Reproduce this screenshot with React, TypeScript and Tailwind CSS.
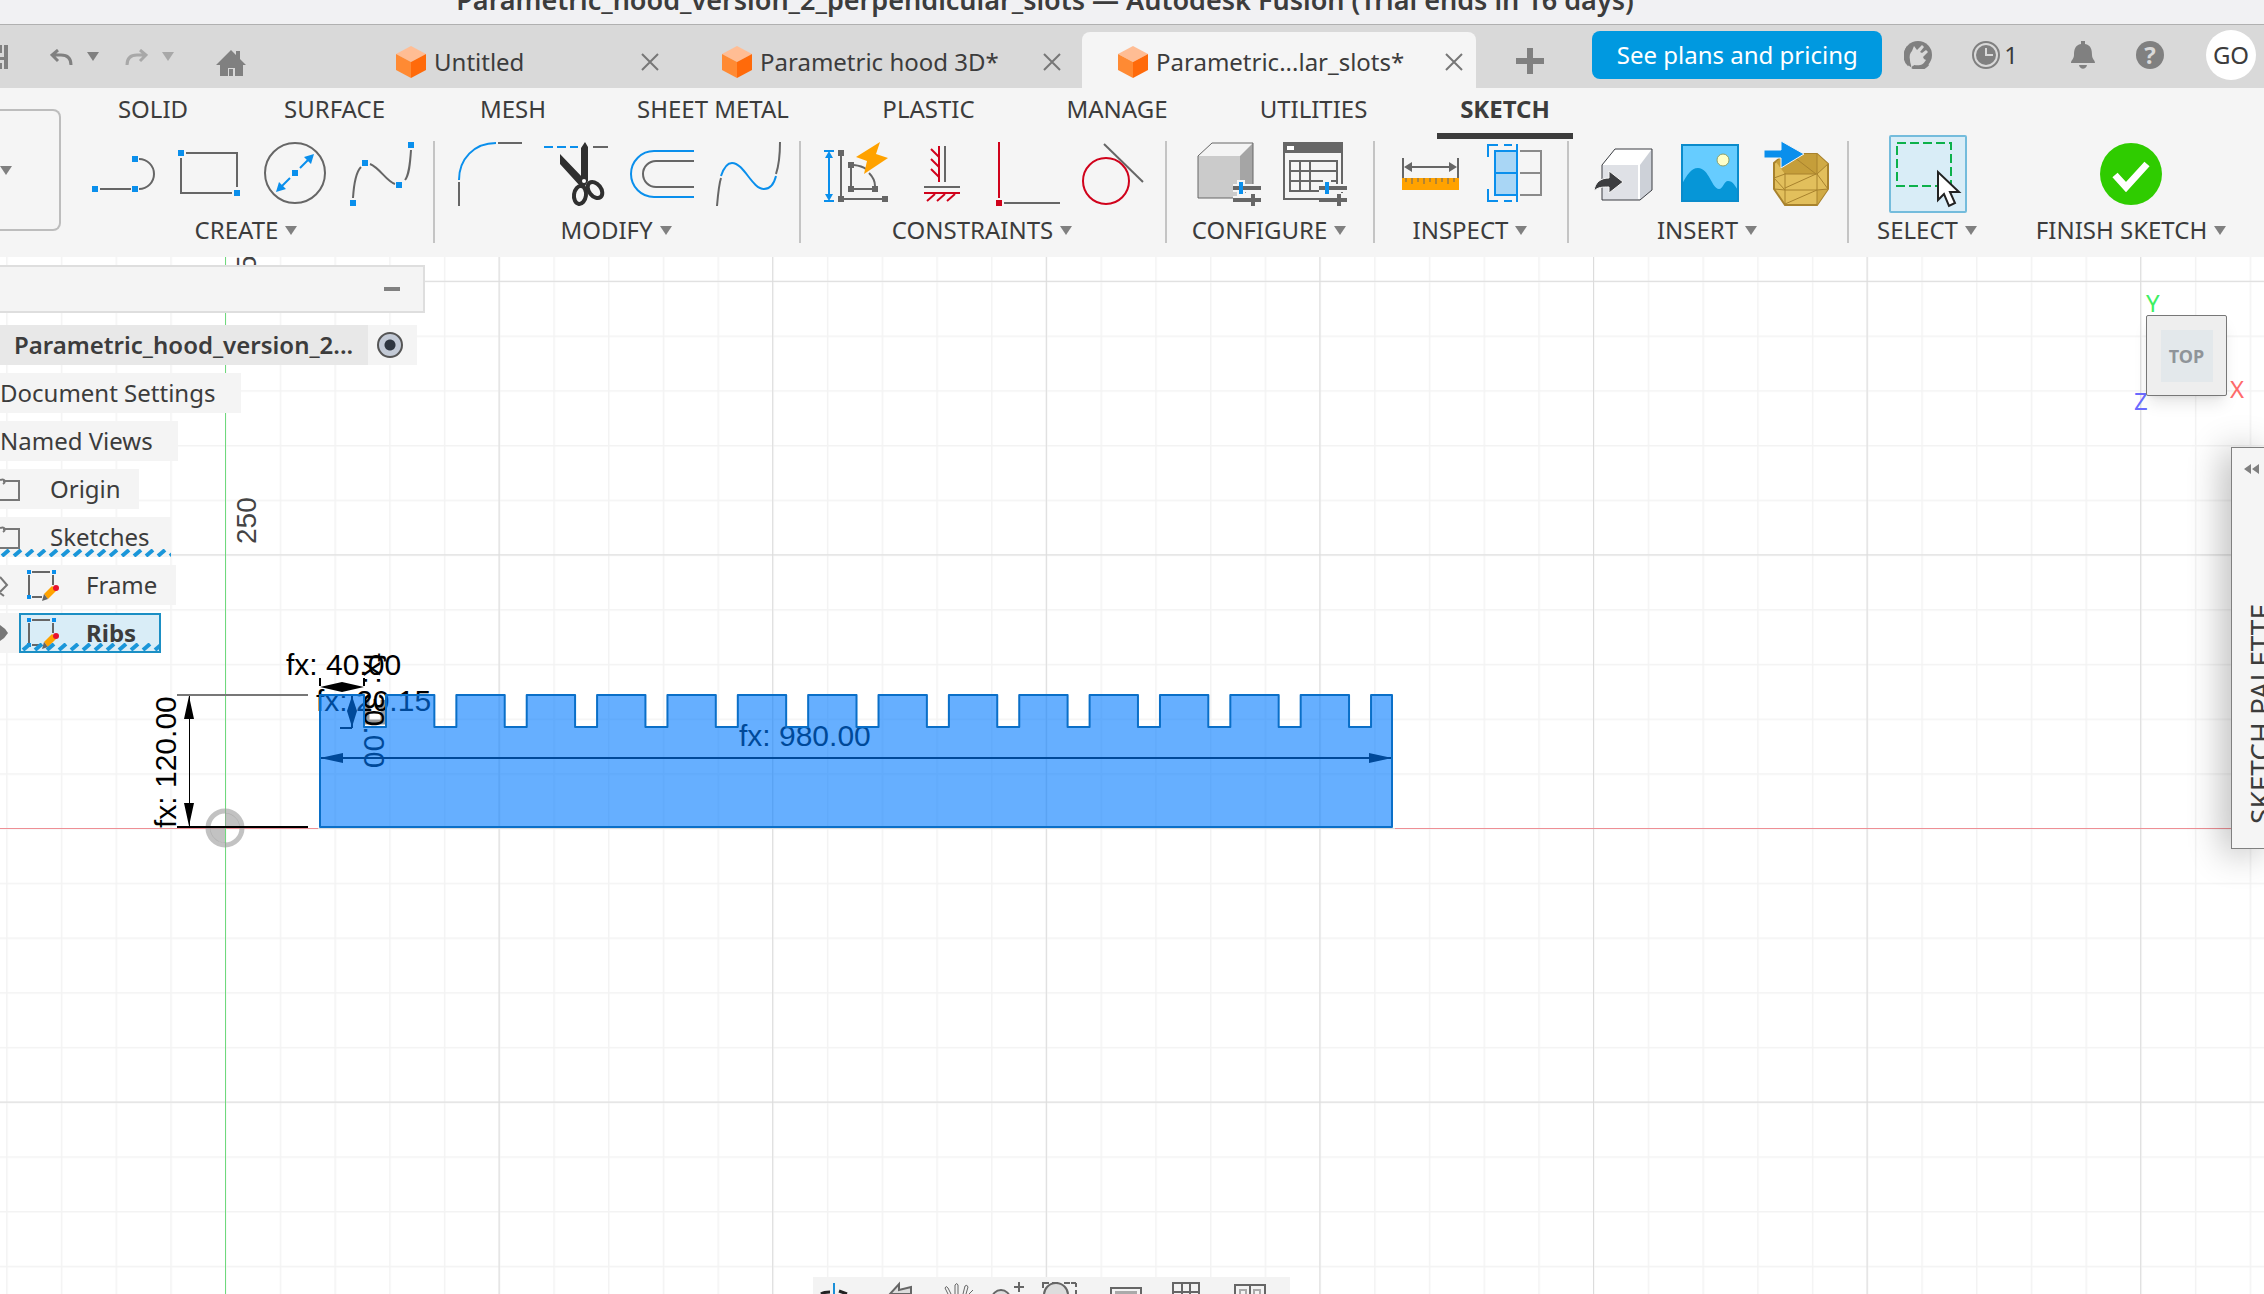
import React from 'react';

const BLUE = '#0a8fec';
const GREY = '#666666';
const RED = '#d0021b';

function Caret({ className = 'fill-[#808080]' }: { className?: string }) {
    return (
        <svg width="12" height="9" viewBox="0 0 12 9" className={className} aria-hidden="true">
            <path d="M0 0h12L6 9z" />
        </svg>
    );
}

function CloseIcon() {
    return (
        <svg width="18" height="18" viewBox="0 0 18 18" fill="none" stroke="#777" strokeWidth="2" aria-hidden="true">
            <path d="M1 1l16 16M17 1L1 17" />
        </svg>
    );
}

function DocCube() {
    return (
        <svg width="30" height="32" viewBox="0 0 30 32" className="shrink-0" aria-hidden="true">
            <path d="M15 0l15 8-15 8L0 8z" fill="#ffbd94" />
            <path d="M0 8l15 8v16L0 24z" fill="#ff8a33" />
            <path d="M30 8l-15 8v16l15-8z" fill="#ff6a0a" />
        </svg>
    );
}

function Icon({ children }: { children: React.ReactNode }) {
    return (
        <svg width="64" height="64" viewBox="0 0 64 64" fill="none" stroke={GREY} strokeWidth="2" className="overflow-visible">
            {children}
        </svg>
    );
}

function Dots({ points, color = BLUE, size = 6 }: { points: number[][]; color?: string; size?: number }) {
    return (
        <g fill={color} stroke="none">
            {points.map(([x, y]) => (
                <rect key={`${x}-${y}`} x={x - size / 2} y={y - size / 2} width={size} height={size} />
            ))}
        </g>
    );
}

function Sliders() {
    return (
        <>
            <path d="M36 46h28M36 58h28M56 51v14M44 38v16" stroke="#f5f5f5" strokeWidth="8" />
            <path d="M36 46h28M36 58h28M56 52v12" strokeWidth="4" />
            <path d="M44 40v12" stroke={BLUE} strokeWidth="4" />
        </>
    );
}

const LineIcon = () => (
    <Icon>
        <path d="M8 47h31M47 17a15 15 0 0 1 0 30" />
        <Dots points={[[3, 47], [43, 47], [43, 17]]} />
    </Icon>
);

const RectangleIcon = () => (
    <Icon>
        <path d="M8 11h51v34M3 16v35h51" />
        <Dots points={[[3, 11], [59, 51]]} />
    </Icon>
);

const CircleIcon = () => (
    <Icon>
        <circle cx="31" cy="31" r="30" />
        <path d="M36 26l8-8M26 36l-8 8" stroke={BLUE} />
        <path d="M50 12l-3 10-7-7zM12 50l3-10 7 7z" fill={BLUE} stroke="none" />
        <Dots points={[[31, 31]]} />
    </Icon>
);

const SplineIcon = () => (
    <Icon>
        <path d="M3 56C4 40 6 30 11 25M20 22c10 4 16 17 25 20M55 38c4-5 5-15 6-30" />
        <Dots points={[[3, 61], [15, 21], [49, 43], [61, 3]]} />
    </Icon>
);

const FilletIcon = () => (
    <Icon>
        <path d="M1 40v24M40 1h24" />
        <path d="M1 38C1 17 16 1 38 1" stroke={BLUE} />
    </Icon>
);

const TrimIcon = () => (
    <Icon>
        <path d="M0 5h34" stroke={BLUE} strokeDasharray="9 4" />
        <path d="M49 5h15" />
        <path d="M37 6l4-6 3 5v34l-3 5-4-6zM16 12l24 25 1 8-5-1-20-22z" fill="#2f2f2f" stroke="none" />
        <g stroke="#2f2f2f" strokeWidth="4">
            <ellipse cx="36" cy="53" rx="6" ry="9" transform="rotate(8 36 53)" />
            <ellipse cx="51" cy="48" rx="6" ry="9" transform="rotate(-38 51 48)" />
        </g>
        <circle cx="40" cy="39" r="2" fill="#fff" stroke="none" />
    </Icon>
);

const OffsetIcon = () => (
    <Icon>
        <path d="M64 9H24a23 23 0 0 0 0 46h40" stroke={BLUE} />
        <path d="M64 19H26a13 13 0 0 0 0 26h38" />
    </Icon>
);

const CurveIcon = () => (
    <Icon>
        <path d="M1 64C2 52 3 42 5 36M60 32c3-9 4-20 4-32" />
        <path d="M5 34c3-9 7-13 11-13 12 0 20 26 32 26 6 0 10-5 12-13" stroke={BLUE} />
    </Icon>
);

const DimensionIcon = () => (
    <Icon>
        <path d="M0 9h10M0 59h10M5 12v44" stroke={BLUE} />
        <path d="M5 9l4 7H1zM5 59l4-7H1z" fill={BLUE} stroke="none" />
        <path d="M17 11v46h44M27 23v24h24M30 23q8 1 12 4M45 31q6 6 6 13" />
        <Dots points={[[17, 11], [17, 57], [61, 57], [27, 23], [27, 47], [51, 47]]} color={GREY} />
        <path d="M56 0L32 15l11 4-3 13 24-16-12-4z" fill="#ffa200" stroke="none" />
    </Icon>
);

const FixIcon = () => (
    <Icon>
        <path d="M35 4v36M14 45h36" />
        <path d="M29 4v36M21 7l8 8M21 17l8 8M21 27l8 8M14 51h36M25 52l-8 7M35 52l-8 7M45 52l-8 7" stroke={RED} />
    </Icon>
);

const PerpendicularIcon = () => (
    <Icon>
        <path d="M8 61h56" />
        <path d="M3 0v56" stroke={RED} />
        <Dots points={[[3, 61]]} color={RED} />
    </Icon>
);

const TangentIcon = () => (
    <Icon>
        <path d="M22 2l39 38" />
        <circle cx="24" cy="39" r="23" stroke={RED} />
    </Icon>
);

const ConfigureIcon = () => (
    <Icon>
        <path d="M1 14L15 1h41L43 14z" fill="#f4f4f4" stroke="none" />
        <path d="M1 14h42v42H1z" fill="#cbcbcb" stroke="none" />
        <path d="M43 14L56 1v41L43 56z" fill="#a5a5a5" stroke="none" />
        <path d="M1 14L15 1h41v41L43 56H1z" strokeWidth="1" />
        <Sliders />
    </Icon>
);

const TableIcon = () => (
    <Icon>
        <path d="M1 1h58v56H1z" />
        <path d="M0 0h60v11H0z" fill={GREY} stroke="none" />
        <path d="M4 4h7v4H4z" fill="#fff" stroke="none" />
        <path d="M7 19h47v30H7zM7 29h47M7 39h47M17 19v30M27 19v30" />
        <Sliders />
    </Icon>
);

const MeasureIcon = () => (
    <Icon>
        <path d="M5 16v20M60 16v20M10 25h45" />
        <path d="M6 25l8-5v10zM59 25l-8-5v10z" fill={GREY} stroke="none" />
        <path d="M4 36h57v12H4z" fill="#ffa200" stroke="none" />
        <path d="M8 36v4M14 36v6M20 36v4M26 36v6M32 36v4M38 36v6M44 36v4M50 36v6M56 36v4" strokeWidth="1" />
    </Icon>
);

const SectionIcon = () => (
    <Icon>
        <path d="M11 9h22v44H11z" fill="#a9d6f5" stroke={BLUE} />
        <path d="M36 9h21v44H36M36 31h21" stroke="#8a8a8a" />
        <path d="M10 31h23M33 2v58M4 15V3h10M4 47v12h10M20 3h8M20 59h8" stroke={BLUE} />
    </Icon>
);

const InsertIcon = () => (
    <Icon>
        <path d="M10 23L23 7h37L48 23z" fill="#fff" stroke="none" />
        <path d="M10 23h38v35H10z" fill="#dfe1e6" stroke="none" />
        <path d="M48 23L60 7v41L48 58z" fill="#cdd1d8" stroke="none" />
        <path d="M10 23L23 7h37v41L48 58H10z" stroke="#3a3d42" strokeWidth="1" />
        <path d="M47 23v34" stroke="#fff" />
        <path d="M17 29l14 11-14 11v-6c-7 0-11 0-15 4 1-9 7-13 15-13z" fill="#3c3d40" stroke="#f5f5f5" strokeWidth="1" />
    </Icon>
);

const CanvasIcon = () => (
    <Icon>
        <path d="M4 3h56v56H4z" fill="#66ccff" stroke="none" />
        <path d="M4 42C9 33 13 26 20 26c11 0 14 21 21 21 4 0 5-8 9-8 5 0 7 5 10 9v11H4z" fill="#0696d7" stroke="none" />
        <circle cx="45" cy="18" r="6" fill="#ffffc8" stroke="#8fa06a" strokeWidth="1" />
        <path d="M4 3h56v56H4z" stroke="#0a8bcb" />
    </Icon>
);

const MeshIcon = () => (
    <Icon>
        <path d="M21 12h32l11 10v25L53 63H21L10 47V21z" fill="#e2bf5c" stroke="#a8822d" />
        <path d="M21 12h32v20H21L12 20z" fill="#c59e3a" stroke="none" />
        <path d="M53 12l11 10-11 10zM53 48l11-1-11 16z" fill="#d0aa45" stroke="none" />
        <path d="M53 12v51M21 31v32M10 36l11-4h32l11-10M10 47l11 1h32l11-1M26 12l26 20-31 14M53 48L21 62M53 32l11 15M21 48L10 36" stroke="#a8822d" strokeWidth="1" />
        <path d="M0 8h17V-1l23 13-23 14v-10H0z" fill={BLUE} stroke="#f5f5f5" strokeWidth="1" />
    </Icon>
);

function SelectIcon() {
    return (
        <svg width="74" height="74" viewBox="0 0 74 74" fill="none">
            <path d="M6 6h54v43H6z" stroke="#0db14b" strokeWidth="2" strokeDasharray="9 4" />
            <path d="M47 35v28l6-6 5 12 6-3-5-11h9z" fill="#fff" stroke="#222" strokeWidth="2" />
        </svg>
    );
}

const FinishIcon = () => (
    <Icon>
        <circle cx="31" cy="32" r="31" fill="#2fcc00" stroke="none" />
        <path d="M15 33l11 12 21-23" stroke="#fff" strokeWidth="7" />
    </Icon>
);

const ribbonTabs = [
    { name: 'SOLID', width: 'w-[116px]' },
    { name: 'SURFACE', width: 'w-[157px]' },
    { name: 'MESH', width: 'w-[110px]' },
    { name: 'SHEET METAL', width: 'w-[200px]' },
    { name: 'PLASTIC', width: 'w-[141px]' },
    { name: 'MANAGE', width: 'w-[146px]' },
    { name: 'UTILITIES', width: 'w-[157px]' },
    { name: 'SKETCH', width: 'w-[136px]' },
];

const groups = [
    { label: 'CREATE', width: 'w-[374px]', pad: 'pl-3', tools: [['Line', LineIcon], ['Rectangle', RectangleIcon], ['Circle', CircleIcon], ['Spline', SplineIcon]] },
    { label: 'MODIFY', width: 'w-[366px]', pad: 'pl-1', tools: [['Fillet', FilletIcon], ['Trim', TrimIcon], ['Offset', OffsetIcon], ['Blend curve', CurveIcon]] },
    { label: 'CONSTRAINTS', width: 'w-[366px]', pad: 'pl-1', tools: [['Dimension', DimensionIcon], ['Fix', FixIcon], ['Perpendicular', PerpendicularIcon], ['Tangent', TangentIcon]] },
    { label: 'CONFIGURE', width: 'w-[208px]', pad: 'pl-1', tools: [['Configure', ConfigureIcon], ['Table', TableIcon]] },
    { label: 'INSPECT', width: 'w-[194px]', pad: 'pl-1', tools: [['Measure', MeasureIcon], ['Section', SectionIcon]] },
    { label: 'INSERT', width: 'w-[280px]', pad: 'pl-1', tools: [['Derive', InsertIcon], ['Canvas', CanvasIcon], ['Mesh', MeshIcon]] },
] as { label: string; width: string; pad: string; tools: [string, React.FC][] }[];

function GroupLabel({ children }: { children: string }) {
    return (
        <button type="button" className="mt-2 flex items-center gap-[7px] pr-[2px] text-2xl leading-8 whitespace-nowrap">
            {children}
            <Caret />
        </button>
    );
}

function DocTab({ name, className = '' }: { name: string; className?: string }) {
    return (
        <div className={`flex h-14 shrink-0 items-center justify-between rounded-t-lg pt-1 pl-9 ${className}`}>
            <a href="#" className="flex items-center gap-2 text-2xl leading-8 whitespace-nowrap">
                <DocCube />
                {name}
            </a>
            <button type="button" aria-label={`Close ${name}`}>
                <CloseIcon />
            </button>
        </div>
    );
}

function TopBar() {
    return (
        <div className="flex h-16 items-center border-t border-[#b0b0b0] bg-[#d9d9d9]">
            <div className="flex w-[360px] shrink-0 items-center">
                <button type="button" aria-label="Save">
                    <svg width="8" height="26" viewBox="0 0 8 26" fill="#808080">
                        <path d="M0 1h2v8H0zM4 1h4v24H4zM0 13h5v3H0zM0 19h2v6H0z" />
                    </svg>
                </button>
                <button type="button" aria-label="Undo" className="ml-[42px]">
                    <svg width="23" height="16" viewBox="0 0 23 16" fill="none" stroke="#808080" strokeWidth="3">
                        <path d="M8 1L2 6l6 6M2 6h9c7 0 10 4 10 10" />
                    </svg>
                </button>
                <button type="button" aria-label="Undo list" className="ml-[14px]">
                    <Caret />
                </button>
                <button type="button" aria-label="Redo" className="ml-[26px]">
                    <svg width="23" height="16" viewBox="0 0 23 16" fill="none" stroke="#a8a8a8" strokeWidth="3">
                        <path d="M15 1l6 5-6 6M21 6h-9C5 6 2 10 2 16" />
                    </svg>
                </button>
                <button type="button" aria-label="Redo list" className="ml-[14px]">
                    <Caret className="fill-[#a8a8a8]" />
                </button>
                <button type="button" aria-label="Home" className="mt-3 ml-[42px]">
                    <svg width="30" height="28" viewBox="0 0 30 28" fill="#808080">
                        <path d="M15 1l5 5V2h4v8l6 6h-3v11h-8v-8h-7v8H4V16H0z" />
                        <path d="M13 20h4v7h-4z" />
                    </svg>
                </button>
            </div>
            <nav className="flex gap-2 self-end">
                <DocTab name="Untitled" className="w-[318px] pr-[19px]" />
                <DocTab name="Parametric hood 3D*" className="w-[388px] pr-[13px]" />
                <DocTab name="Parametric...lar_slots*" className="w-[394px] bg-[#f5f5f5] pr-[13px]" />
            </nav>
            <button type="button" aria-label="New tab" className="mt-2 ml-10">
                <svg width="28" height="26" viewBox="0 0 28 26" stroke="#808080" strokeWidth="6">
                    <path d="M0 13h28M14 0v26" />
                </svg>
            </button>
            <div className="ml-auto flex items-center pb-1">
                <button type="button" className="h-12 w-[290px] rounded-lg bg-[#0099e0] text-2xl leading-8 whitespace-nowrap text-white">
                    See plans and pricing
                </button>
                <button type="button" aria-label="Extensions" className="ml-[22px]">
                    <svg width="28" height="28" viewBox="0 0 28 28">
                        <circle cx="14" cy="14" r="14" fill="#808080" />
                        <path d="M7 28c1-4-1-5-1-9-1-4 0-7 2-9l2-5 3 4 5-5 2 2-4 5 2 1 4-3 2 2-5 5 1 2 2 1c-3 5-6 6-12 5z" fill="#d9d9d9" />
                        <path d="M4 6C0 12 0 20 5 24" fill="none" stroke="#808080" strokeWidth="3" />
                        <path d="M8 26c6 3 12 2 16-3" fill="none" stroke="#808080" strokeWidth="3" />
                    </svg>
                </button>
                <button type="button" className="ml-10 flex items-center gap-1 text-2xl leading-8">
                    <svg width="28" height="28" viewBox="0 0 28 28" aria-hidden="true">
                        <circle cx="14" cy="14" r="13" fill="none" stroke="#808080" strokeWidth="2" />
                        <circle cx="14" cy="14" r="10" fill="#808080" />
                        <path d="M14 7v7h7" fill="none" stroke="#d9d9d9" strokeWidth="2" />
                    </svg>
                    1
                </button>
                <button type="button" aria-label="Notifications" className="ml-[52px]">
                    <svg width="26" height="28" viewBox="0 0 26 28" fill="#808080">
                        <path d="M11 0h4v3c6 1 7 6 7 11 0 4 3 5 3 8H1c0-3 3-4 3-8C4 9 5 4 11 3zM9 24h8c-1 5-7 5-8 0z" />
                    </svg>
                </button>
                <button type="button" aria-label="Help" className="ml-10 h-7 w-7 rounded-full bg-[#808080] text-2xl leading-7 font-bold text-[#d9d9d9]">
                    ?
                </button>
                <button type="button" className="mr-2 ml-[42px] h-[50px] w-[50px] rounded-full bg-white text-2xl leading-8">
                    GO
                </button>
            </div>
        </div>
    );
}

function Ribbon() {
    return (
        <div className="bg-[#f5f5f5]">
            <nav className="flex gap-[45px] pl-[95px]">
                {ribbonTabs.map((tab) => (
                    <button
                        key={tab.name}
                        type="button"
                        className={`h-[51px] border-b-[6px] pb-1 text-2xl leading-8 whitespace-nowrap ${tab.width} ${
                            tab.name === 'SKETCH' ? 'border-[#3c3c3c] font-bold' : 'border-transparent'
                        }`}
                    >
                        {tab.name}
                    </button>
                ))}
            </nav>
            <div className="flex h-[118px]">
                <button type="button" aria-label="Workspace" className="-mt-[30px] flex h-[122px] w-[61px] items-center rounded-r-lg border-2 border-l-0 border-[#bdbdbd]">
                    <Caret />
                </button>
                {groups.map((group) => (
                    <div key={group.label} className={`flex shrink-0 ${group.width}`}>
                        <div className="flex grow flex-col items-center pt-[3px]">
                            <div className={`flex gap-[22px] ${group.pad}`}>
                                {group.tools.map(([name, ToolIcon]) => (
                                    <button key={name} type="button" aria-label={name} className="h-16 w-16">
                                        <ToolIcon />
                                    </button>
                                ))}
                            </div>
                            <GroupLabel>{group.label}</GroupLabel>
                        </div>
                        <div className="mt-[2px] h-[102px] w-[2px] bg-[#c4c4c4]" />
                    </div>
                ))}
                <div className="flex w-[158px] shrink-0 flex-col items-center pt-[3px]">
                    <button type="button" aria-label="Select" className="-my-[7px] h-[78px] w-[78px] rounded-xs border-2 border-[#74bcdc] bg-[#d9edf7]">
                        <SelectIcon />
                    </button>
                    <GroupLabel>SELECT</GroupLabel>
                </div>
                <div className="flex w-[250px] shrink-0 flex-col items-center pt-[3px]">
                    <button type="button" aria-label="Finish sketch" className="h-16 w-16">
                        <FinishIcon />
                    </button>
                    <GroupLabel>FINISH SKETCH</GroupLabel>
                </div>
            </div>
        </div>
    );
}

const notches = Array.from({ length: 15 }, (_, i) => 139 + i * 70.36);
const outline = `M95 -1V-133${notches.map((x) => `H${x}v32h22v-32`).join('')}H1167V-1z`;

// Everything is drawn around the sketch origin, y pointing down.
function SketchCanvas() {
    return (
        <svg className="absolute inset-0 h-full w-full" fontFamily="'Liberation Sans', Arial, sans-serif" fontSize="30">
            <defs>
                <pattern id="minor" x="225" y="571" width="54.72" height="54.72" patternUnits="userSpaceOnUse">
                    <path d="M0 .5h54.72M.5 0v54.72" stroke="#f3f3f3" strokeWidth="2" />
                </pattern>
                <pattern id="major" x="225" y="571" width="273.6" height="273.6" patternUnits="userSpaceOnUse">
                    <path d="M0 .5h273.6M.5 0v273.6" stroke="#dcdcdc" />
                </pattern>
            </defs>
            <rect width="100%" height="100%" fill="#fff" />
            <rect width="100%" height="100%" fill="url(#minor)" />
            <rect width="100%" height="100%" fill="url(#major)" />
            <g transform="translate(225 571)">
                <path d="M-225 .5H93M1170 .5H3000" stroke="#ee8f95" />
                <path d="M.5 -571V1000" stroke="#6fd97d" />
                <g fontSize="28" fill="#444">
                    <text transform="translate(31 -284) rotate(-90)">250</text>
                    <text transform="translate(31 -557) rotate(-90)">500</text>
                </g>
                <circle r="17" fill="none" stroke="#999" strokeOpacity=".6" strokeWidth="5" />
                <path d="M0 0V-15A15 15 0 0 1 15 0zM0 0V15A15 15 0 0 1 -15 0z" fill="#999" fillOpacity=".6" />

                <g stroke="#000" strokeWidth="1">
                    <path d="M-48 -133H83" stroke="#777" strokeWidth="2" />
                    <path d="M-48 -1H83M95 -150v8M139 -150v8M95 -70H1167M115 -100h12M127 -132v32" strokeWidth="2" />
                    <path d="M-35.5 -132V-2" />
                </g>
                <path d="M-36 -132l5 23h-10zM-36 -2l5 -23h-10zM95 -70l23 -5v10zM1167 -70l-23 -5v10zM95 -141l22 -5 22 5 -22 5zM127 -132l5 15 -5 16 -5 -16z" />
                <path d="M142 -128v22h16v-22" fill="none" stroke="#999" strokeWidth="5" />
                <text transform="translate(-49 0) rotate(-90)">fx: 120.00</text>
                <text x="61" y="-153">fx: 40.00</text>
                <text x="91" y="-117">fx: 20.15</text>
                <text x="514" y="-82">fx: 980.00</text>
                <text transform="translate(139 -175) rotate(90)">fx: 30.00</text>

                <path d={outline} fill="#007aff" fillOpacity=".6" stroke="#0a6fc8" strokeWidth="2" strokeLinejoin="round" />
            </g>
        </svg>
    );
}

function FolderIcon() {
    return (
        <svg width="20" height="24" viewBox="0 0 20 24" fill="none" stroke="#777" strokeWidth="2" className="shrink-0">
            <path d="M0 3c5-2 6 2 3 4M3 4h16v19H0" />
        </svg>
    );
}

function SketchIcon() {
    return (
        <svg width="34" height="32" viewBox="0 0 34 32" fill="none" className="shrink-0">
            <path d="M6 3h18M3 6v20M27 6v10M6 28h10" stroke={GREY} strokeWidth="2" />
            <Dots points={[[3, 3], [28, 3], [3, 28]]} size={4} />
            <path d="M18 25l8-8 5 4-9 9z" fill="#ffa200" />
            <path d="M18 25l4 5-6 2z" fill={GREY} />
            <circle cx="30" cy="19" r="3" fill="#e8112d" />
        </svg>
    );
}

function Hatch() {
    return (
        <svg className="absolute bottom-0 left-0 h-2 w-full">
            <defs>
                <pattern id="hatch" width="12" height="8" patternUnits="userSpaceOnUse">
                    <path d="M2 7l7-6" stroke="#1a96d9" strokeWidth="4" />
                </pattern>
            </defs>
            <rect width="100%" height="8" fill="url(#hatch)" />
        </svg>
    );
}

function Browser() {
    return (
        <aside className="relative flex flex-col items-start gap-2 pt-2 text-2xl leading-10 whitespace-nowrap">
            <div className="mb-1 flex h-12 w-[425px] items-center justify-end border-2 border-l-0 border-[#dedede] bg-[#f4f4f4] pr-[23px]">
                <button type="button" aria-label="Collapse browser" className="h-1 w-4 bg-[#808080]" />
            </div>
            <label className="flex h-10 w-[417px] items-center bg-[#f4f4f4] font-semibold">
                <span className="w-[368px] bg-[#e8e8e8] pl-[14px]">Parametric_hood_version_2...</span>
                <input
                    type="radio"
                    defaultChecked
                    className="ml-[9px] h-[26px] w-[26px] appearance-none rounded-full border-2 border-[#555] bg-[radial-gradient(circle,#2f3640_5px,#c3cad6_6px)]"
                />
            </label>
            <a href="#" className="h-10 w-[241px] bg-[#f4f4f4]">Document Settings</a>
            <a href="#" className="h-10 w-[178px] bg-[#f4f4f4]">Named Views</a>
            <a href="#" className="flex h-10 w-[139px] items-center gap-[30px] bg-[#f4f4f4]">
                <FolderIcon />
                Origin
            </a>
            <a href="#" className="relative flex h-10 w-[171px] items-center gap-[30px] bg-[#f4f4f4]">
                <FolderIcon />
                Sketches
                <Hatch />
            </a>
            <a href="#" className="flex h-10 w-[176px] items-center bg-[#f4f4f4]">
                <svg width="26" height="24" viewBox="0 0 26 24" fill="none" stroke="#777" strokeWidth="2">
                    <path d="M0 4l7 8-7 7M0 20l4 3" />
                </svg>
                <SketchIcon />
                <span className="pl-[26px]">Frame</span>
            </a>
            <a href="#" className="flex h-10 items-center bg-[#f4f4f4] font-bold">
                <svg width="19" height="20" viewBox="0 0 19 20" fill="#777">
                    <path d="M0 2q5 3 8 8-3 5-8 8z" />
                </svg>
                <span className="relative flex h-10 w-[142px] items-center border-2 border-[#1b8fc4] bg-[#d9edf7] pl-[5px]">
                    <SketchIcon />
                    <span className="pl-[26px]">Ribs</span>
                    <Hatch />
                </span>
            </a>
        </aside>
    );
}

function ViewCube() {
    return (
        <div className="absolute top-[30px] right-5 h-[130px] w-[114px] text-2xl leading-6">
            <span className="absolute top-1 left-4 text-[#3df062]">Y</span>
            <span className="absolute right-0 bottom-4 text-[#ff6b6b]">X</span>
            <span className="absolute bottom-1 left-1 text-[#6b6bff]">Z</span>
            <button type="button" className="absolute top-7 left-4 flex h-[81px] w-[81px] items-center justify-center rounded-xs border border-[#777] bg-[#eeeeee] text-lg font-bold text-[#8f9499] shadow-lg">
                <span className="flex h-[52px] w-[52px] items-center justify-center bg-[#e3e8eb]">TOP</span>
            </button>
        </div>
    );
}

function SketchPalette() {
    return (
        <aside className="absolute top-[190px] right-0 flex h-[402px] w-[33px] flex-col items-start justify-between overflow-visible border border-r-0 border-[#808080] bg-[#f5f5f5] pt-4 pb-6 pl-3 shadow-[-6px_4px_36px_rgba(0,0,0,0.3)]">
            <button type="button" aria-label="Expand palette">
                <svg width="16" height="10" viewBox="0 0 16 10" fill="#808080">
                    <path d="M7 0v10L0 5zM15 0v10L8 5z" />
                </svg>
            </button>
            <h2 className="rotate-180 text-[28px] leading-8 whitespace-nowrap [writing-mode:vertical-rl]">SKETCH PALETTE</h2>
        </aside>
    );
}

function NavBar() {
    return (
        <div className="relative mt-auto ml-[813px] h-[17px] w-[477px] overflow-hidden bg-[#f3f3f3]">
            <svg width="477" height="17" viewBox="0 0 477 17" fill="none" stroke="#666" strokeWidth="2">
                <path d="M21 6v11" stroke="#1a8fd8" />
                <path d="M8 17q3-2 9-2M26 14l8 3" stroke="#222" strokeWidth="3" />
                <path d="M77 17l9-10v6l12-3v7z" fill="#ddd" />
                <path d="M135 17l-3-6q1-3 3 0l3 6M142 17V8q2-3 3 0v9M150 17l2-8q2-2 3 1l-2 7M156 17l4-4" strokeWidth="1" />
                <circle cx="188" cy="22" r="9" fill="#ddd" />
                <path d="M206 5v10M201 10h10" />
                <circle cx="243" cy="18" r="12" fill="#ddd" />
                <path d="M230 6h6M239 6h6M251 6h6M263 6v4M263 13v4M258 6h5M230 5v6" />
                <path d="M298 17v-6h30v6" />
                <path d="M302 14h22v3h-22z" fill="#aaa" stroke="none" />
                <path d="M360 17V6h26v11M360 15h26M369 6v11M377 6v11" />
                <path d="M422 17V8h30v9M437 8v9" />
                <path d="M427 17v-4h6v4M441 17v-4h6v4" stroke="#aaa" />
            </svg>
        </div>
    );
}

export default function App() {
    return (
        <div className="flex min-h-screen flex-col overflow-hidden bg-white font-['Noto_Sans',sans-serif] text-[#3c3c3c]">
            <header>
                <div className="flex h-6 items-end justify-center overflow-hidden bg-[#f1f1f3] pr-[174px] pb-2">
                    <h1 className="text-[27px] leading-8 font-semibold whitespace-nowrap">
                        Parametric_hood_version_2_perpendicular_slots — Autodesk Fusion (Trial ends in 16 days)
                    </h1>
                </div>
                <TopBar />
                <Ribbon />
            </header>
            <main className="relative flex grow flex-col overflow-hidden">
                <SketchCanvas />
                <Browser />
                <ViewCube />
                <SketchPalette />
                <NavBar />
            </main>
        </div>
    );
}
